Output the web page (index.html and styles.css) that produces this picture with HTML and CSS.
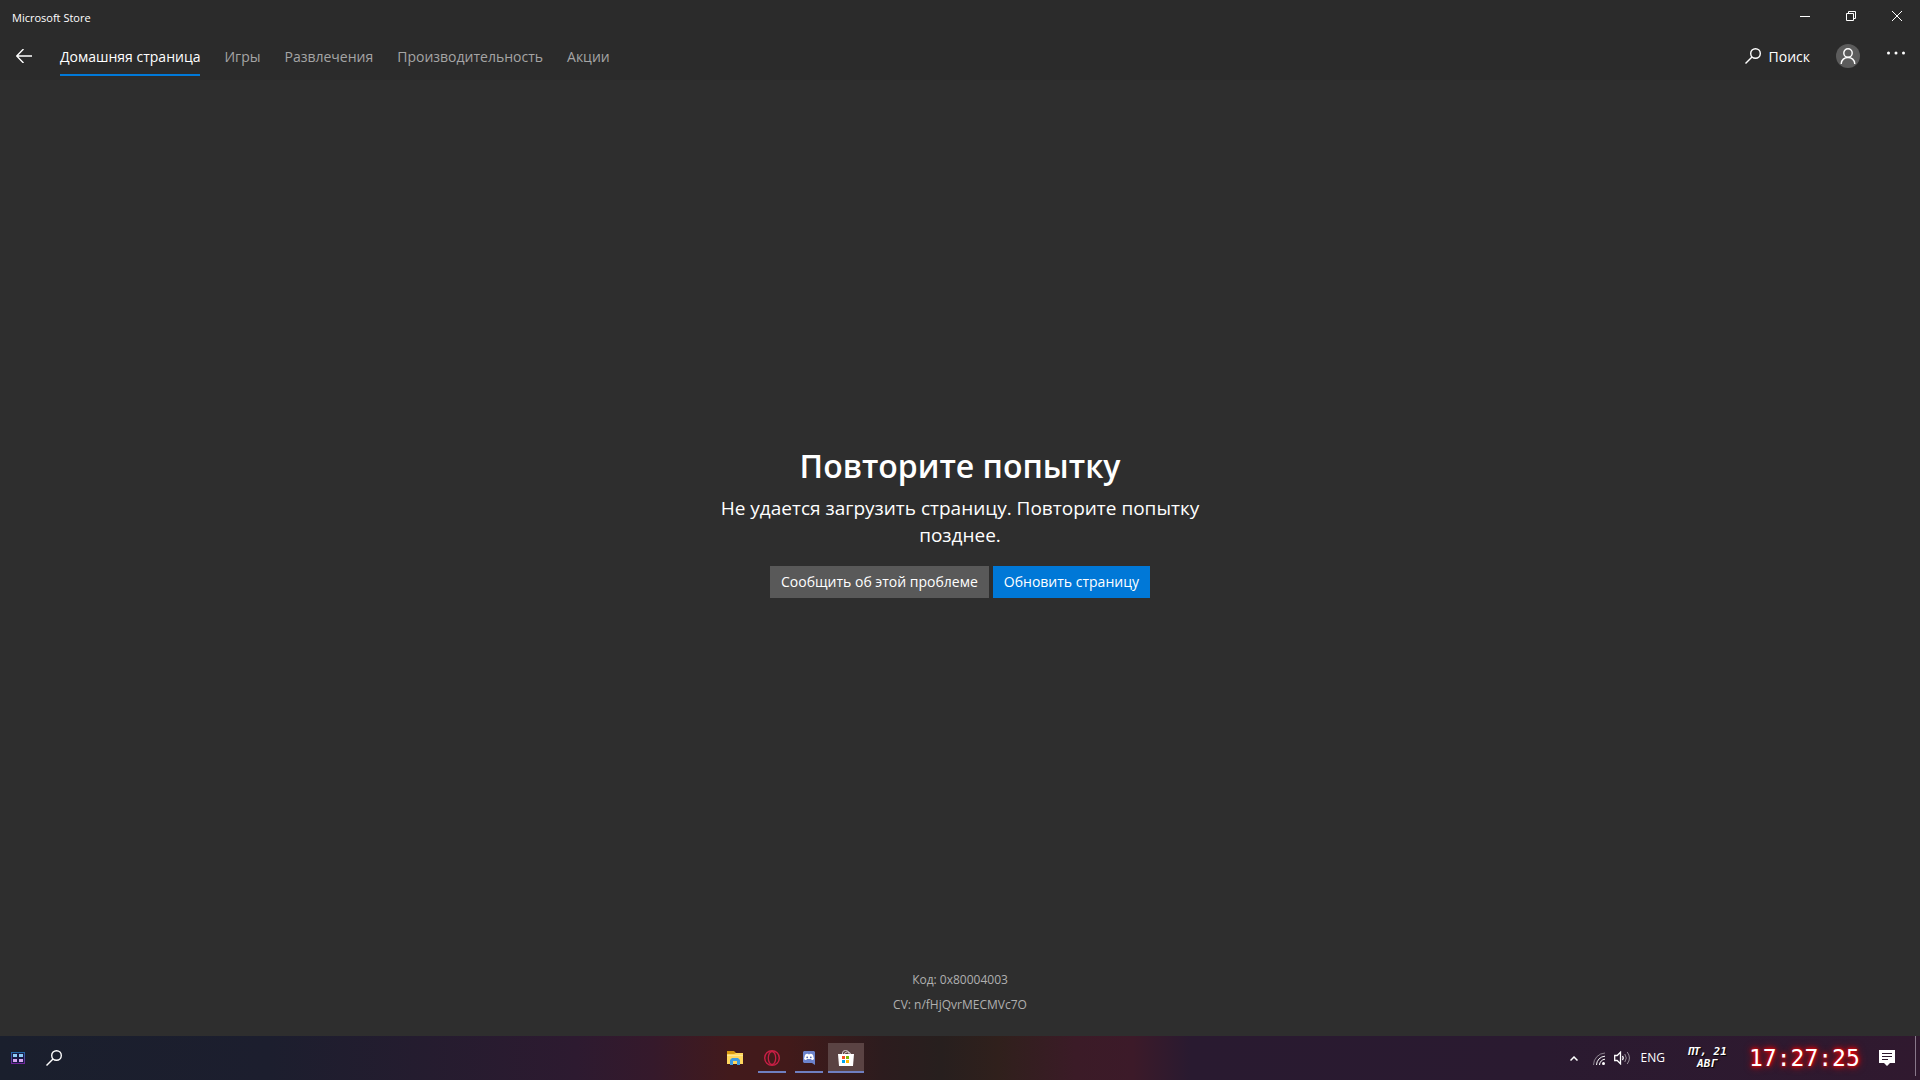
FILE: index.html
```html
<!DOCTYPE html>
<html lang="ru">
<head>
<meta charset="utf-8">
<title>Microsoft Store</title>
<link rel="stylesheet" href="styles.css">
</head>
<body>
<header class="header">
  <div class="titlebar">
    <span class="app-name">Microsoft Store</span>
    <div class="window-controls">
      <button class="window-btn" aria-label="Свернуть"><svg width="10" height="10" viewBox="0 0 10 10"><path d="M0 5.500H10"/></svg></button>
      <button class="window-btn" aria-label="Восстановить"><svg width="10" height="10" viewBox="0 0 10 10"><path d="M.5 2.500h7v7h-7zM2.500 2.500v-2h7v7h-2"/></svg></button>
      <button class="window-btn" aria-label="Закрыть"><svg width="10" height="10" viewBox="0 0 10 10"><path d="M0 0L10 10M10 0L0 10"/></svg></button>
    </div>
  </div>
  <div class="navbar">
    <button class="back" aria-label="Назад"><svg width="16" height="14" viewBox="0 0 16 14" stroke-width="1.400"><path d="M16 7H1M7.500 0L.7 7l6.800 7"/></svg></button>
    <nav class="tabs">
      <a class="tab tab-active" href="#">Домашняя страница</a>
      <a class="tab" href="#">Игры</a>
      <a class="tab" href="#">Развлечения</a>
      <a class="tab" href="#">Производительность</a>
      <a class="tab" href="#">Акции</a>
    </nav>
    <div class="actions">
      <button class="search"><svg width="16" height="16" viewBox="0 0 16 16" stroke-width="1.400"><circle cx="10.500" cy="5.500" r="4.800"/><path d="M7 9L.5 15.500"/></svg>Поиск</button>
      <button class="account" aria-label="Учётная запись"><svg width="16" height="16" viewBox="0 0 16 16" stroke-width="1.400"><circle cx="8" cy="5" r="4.200"/><path d="M1.200 16c0-8.700 13.600-8.700 13.600 0"/></svg></button>
      <button class="more" aria-label="Ещё"><svg width="18" height="4" viewBox="0 0 18 4"><circle cx="1.500" cy="2" r="1.500"/><circle cx="9" cy="2" r="1.500"/><circle cx="16.500" cy="2" r="1.500"/></svg></button>
    </div>
  </div>
</header>

<main class="page">
  <section class="error">
    <h1 class="error-title">Повторите попытку</h1>
    <p class="error-text">Не удается загрузить страницу. Повторите попытку позднее.</p>
    <div class="error-buttons">
      <button class="btn">Сообщить об этой проблеме</button>
      <button class="btn btn-primary">Обновить страницу</button>
    </div>
  </section>
  <footer class="codes">
    <p>Код: 0x80004003</p>
    <p>CV: n/fHjQvrMECMVc7O</p>
  </footer>
</main>

<div class="taskbar">
  <div class="taskbar-start">
    <button class="task-btn" aria-label="Пуск"><svg width="14" height="12" viewBox="0 0 14 12">
      <defs><linearGradient id="start" x2="0" y2="1"><stop stop-color="#2468a8"/><stop offset="1" stop-color="#74259b"/></linearGradient></defs>
      <rect x=".5" y=".5" width="13" height="11" fill="#191b45" stroke="url(#start)"/><path fill="#8ecdf5" d="M2 2h4v3H2zM8 2h4v3H8z"/><path fill="#d6a7ef" d="M2 7h4v3H2zM8 7h4v3H8z"/></svg></button>
    <button class="task-btn" aria-label="Поиск в системе"><svg class="line-icon" width="16" height="16" viewBox="0 0 16 16" stroke-width="1.400"><circle cx="10.500" cy="5.500" r="4.800"/><path d="M7 9L.5 15.500"/></svg></button>
  </div>
  <div class="taskbar-apps">
    <button class="task-btn" aria-label="Проводник"><svg width="16" height="14" viewBox="0 0 16 14"><path fill="#d99a12" d="M0 0h7l2 2v3H0z"/><path fill="#ffd75e" d="M0 3h7l2-1h7v11H0z"/><path fill="#ffe691" d="M0 4h16v1H0z"/><path fill="#3f9be0" d="M3 14V9l2-2h6l2 2v5h-3v-4H6v4z"/></svg></button>
    <button class="task-btn task-open" aria-label="Opera"><svg width="16" height="16" viewBox="0 0 16 16" fill="none" stroke="#c81f45"><circle cx="8" cy="8" r="7.300" stroke-width="1.400"/><ellipse cx="8" cy="8" rx="3.700" ry="6.500" stroke-width="1.300"/></svg></button>
    <button class="task-btn task-open" aria-label="Discord"><svg width="12" height="14" viewBox="0 0 12 14"><path fill="#6c83cc" d="M1 0h10l1 1v13l-3-2H1l-1-1V1z"/><path fill="#fff" d="M2 4q2-2 4-.5Q8 2 10 4l1 4q-2 2-3 0H4Q3 10 1 8z"/><circle cx="4.200" cy="6.300" r=".9" fill="#5268b3"/><circle cx="7.800" cy="6.300" r=".9" fill="#5268b3"/></svg></button>
    <button class="task-btn task-open task-current" aria-label="Microsoft Store"><svg width="16" height="16" viewBox="0 0 16 16"><path fill="none" stroke="#d7cfcf" d="M4.500 5V3q0-2.500 3-2.500T11 3v2M6.500 4q0-2 3-2t3 2"/><path fill="#fff" d="M0 4h16l-1 12H1z"/><path fill="#f25022" d="M4 6h3v3H4z"/><path fill="#7fba00" d="M8 6h3v3H8z"/><path fill="#00a4ef" d="M4 10h3v3H4z"/><path fill="#ffb900" d="M8 10h3v3H8z"/></svg></button>
  </div>
  <div class="tray">
    <svg class="line-icon tray-up" width="8" height="5" viewBox="0 0 8 5" stroke-width="1.500"><path d="M.5 4.500L4 1l3.500 3.500"/></svg>
    <svg class="line-icon tray-net" width="13" height="13" viewBox="0 0 13 13"><path opacity=".45" d="M.5 13A12 12 0 0 1 12 1"/><path d="M3.500 13A9 9 0 0 1 12 4.200M6.500 13A6 6 0 0 1 12 7.200"/><circle cx="10.500" cy="11.500" r="1.500" fill="#fff" stroke="none"/></svg>
    <svg class="line-icon tray-sound" width="17" height="14" viewBox="0 0 17 14"><path stroke-width="1.300" d="M.7 4.500h2.500L6.500 1.200v11.600L3.200 9.500H.7z"/><path stroke-width="1.300" d="M8.500 5q1.500 2 0 4"/><path opacity=".5" d="M10.800 3q3 4 0 8M13.200 1q4.500 6 0 12"/></svg>
    <span class="tray-lang">ENG</span>
    <span class="tray-date">ПТ, 21<br>АВГ</span>
    <time class="tray-clock">17:27:25</time>
    <button class="tray-notes" aria-label="Центр уведомлений"><svg width="16" height="16" viewBox="0 0 16 16"><path fill="#fff" d="M0 0h16v13h-5l-3 3-3-3H0z"/><path stroke="#2c182c" d="M3 3.500h10M3 6.500h10M3 9.500h6"/></svg></button>
    <span class="show-desktop"></span>
  </div>
</div>
</body>
</html>
```
FILE: styles.css
```css
* { box-sizing: border-box; }

body {
  margin: 0;
  min-height: 100vh;
  display: flex;
  flex-direction: column;
  background: #2e2e2e;
  color: #fff;
  font-family: "Open Sans", "Noto Sans", sans-serif;
  font-size: 14px;
}

h1, p { margin: 0; }

button {
  margin: 0;
  padding: 0;
  border: 0;
  background: none;
  color: inherit;
  font: inherit;
}

svg { display: block; flex: none; }

.header { background: #2b2b2b; }

.titlebar {
  display: flex;
  justify-content: space-between;
  height: 32px;
  padding-left: 12px;
}

.app-name { font-size: 11px; line-height: 36px; }

.window-controls { display: flex; }

.window-btn {
  display: grid;
  place-items: center;
  width: 46px;
}

.window-btn svg, .back svg, .search svg, .account svg, .line-icon {
  fill: none;
  stroke: #fff;
}

.navbar { display: flex; height: 48px; }

.back {
  display: grid;
  place-items: center;
  width: 48px;
}

.tabs {
  display: flex;
  gap: 24px;
  padding-left: 12px;
}

.tab {
  height: 44px;
  line-height: 50px;
  color: #a5a5a5;
  text-decoration: none;
  white-space: nowrap;
}

.tab-active { color: #fff; border-bottom: 2px solid #0078d7; }

.actions {
  display: flex;
  margin-left: auto;
  padding-right: 15px;
}

.search {
  display: flex;
  align-items: center;
  gap: 8px;
  padding-right: 26px;
}

.account {
  display: grid;
  place-items: center;
  align-self: center;
  width: 24px;
  height: 24px;
  border-radius: 50%;
  background: #5c5c5c;
}

.more { padding: 0 0 6px 27px; }
.more svg { fill: #fff; }

.page {
  flex: 1;
  display: flex;
  flex-direction: column;
  align-items: center;
}

.error {
  flex: 1;
  display: flex;
  flex-direction: column;
  align-items: center;
  justify-content: center;
  padding-bottom: 6px;
}

.error-title {
  font-size: 32px;
  line-height: 44px;
  font-weight: 600;
}

.error-text {
  max-width: 480px;
  margin: 7px 0 17px;
  font-size: 19px;
  line-height: 27px;
  text-align: center;
}

.error-buttons { display: flex; gap: 4px; }

.btn {
  height: 32px;
  padding: 0 11px;
  background: #595959;
}

.btn-primary { background: #0078d7; }

.codes {
  padding-bottom: 19px;
  color: #b0b0b0;
  font-size: 12px;
  line-height: 25px;
  text-align: center;
}

.taskbar {
  display: flex;
  height: 44px;
  background: linear-gradient(90deg, #1a1f2d 0%, #1c1e2e 14%, #2d1a30 30%, #35192b 34%, #421a1c 38%, #421a1a 41%, #2c1c1e 46%, #271f1e 49%, #30201c 52%, #3b1b27 56%, #3c1a29 59%, #291a30 62%, #2a1a30 80%, #30192f 100%);
}

.taskbar-start {
  display: flex;
  flex: 0 0 37%;
}

.taskbar-apps { display: flex; gap: 1px; padding-left: 7px; }

.task-btn {
  display: grid;
  place-items: center;
  width: 36px;
  height: 36px;
  align-self: center;
}

.taskbar-apps .task-btn { height: 30px; }

.task-open {
  background: linear-gradient(#6f7fc0, #6f7fc0) center bottom / 28px 2px no-repeat;
}

.task-current {
  background-color: #5a4343;
  background-size: 100% 2px;
}

.tray {
  display: flex;
  align-items: center;
  margin-left: auto;
}

.tray-up { margin-right: 15px; }
.tray-net { margin-right: 8px; }
.tray-sound { margin-right: 10px; }

.tray-lang { font-size: 12px; line-height: 40px; }

.tray-date {
  width: 84px;
  font: italic bold 11px/12px "DejaVu Sans Mono", monospace;
  text-align: center;
  text-shadow: 1px 1px 1px #000;
}

.tray-clock {
  width: 110px;
  font: 23px/28px "DejaVu Sans Mono", monospace;
  text-shadow: 0 0 3px #f00, 0 0 5px #f00, 0 0 8px #e00;
}

.tray-notes { margin: 0 20px; }

.show-desktop {
  width: 5px;
  height: 40px;
  align-self: flex-start;
  border-left: 1px solid #88788a;
}
```
